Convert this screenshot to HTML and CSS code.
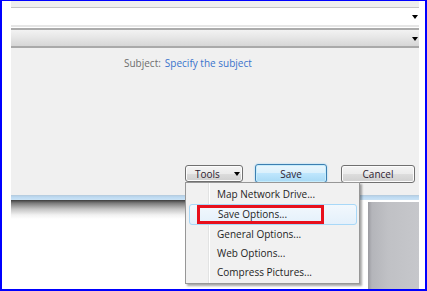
FILE: index.html
```html
<!DOCTYPE html>
<html lang="en">
<head>
    <meta charset="UTF-8">
    <title>Save As - Tools</title>
    <link rel="stylesheet" href="styles.css">
</head>
<body>
<div class="frame">
    <div class="window">
        <div class="top-band"></div>
        <div class="combo-row"><span class="arrow"></span></div>
        <div class="bar-row"><span class="arrow"></span></div>
        <div class="panel">
            <div class="subject">
                <span class="subject-label">Subject:</span>
                <span class="subject-value">Specify the subject</span>
            </div>
            <div class="buttons">
                <button class="btn tools"><span>Tools</span><span class="arrow"></span></button>
                <button class="btn save">Save</button>
                <button class="btn cancel">Cancel</button>
            </div>
        </div>
        <div class="below">
            <div class="blue-line"></div>
            <div class="behind">
                <div class="shade"></div>
                <div class="other-window"></div>
            </div>
        </div>
    </div>

    <ul class="menu">
        <li>Map Network Drive...</li>
        <li class="hover">Save Options...</li>
        <li>General Options...</li>
        <li>Web Options...</li>
        <li>Compress Pictures...</li>
    </ul>
    <div class="marker"></div>
</div>
</body>
</html>
```

FILE: styles.css
```css
body {
    margin: 0;
    font-family: "Open Sans", "Noto Sans", sans-serif;
    font-size: 10px;
}

.frame {
    position: relative;
    width: 427px;
    height: 291px;
    box-sizing: border-box;
    border: 2px solid #0000ff;
    border-top-width: 1px;
    background: #fff;
    padding: 0 6px 0 9px;
    overflow: hidden;
}

.window {
    display: flex;
    flex-direction: column;
    height: 100%;
}

.top-band {
    height: 6px;
    background: #eeeeee;
    border-bottom: 1px solid #c4c4c4;
}

.combo-row {
    height: 17px;
    background: #fff;
    border-bottom: 2px solid #e6e6e6;
    position: relative;
}

.bar-row {
    height: 16px;
    border-top: 2px solid #ababab;
    border-bottom: 2px solid #a9a9a9;
    margin-top: 1px;
    background: linear-gradient(#f2f2f2, #e8e8e8 40%, #d6d6d6);
    position: relative;
}

.arrow {
    display: inline-block;
    width: 0;
    height: 0;
    border-left: 3px solid transparent;
    border-right: 3px solid transparent;
    border-top: 4px solid #000;
}

.combo-row .arrow,
.bar-row .arrow {
    position: absolute;
    right: 1px;
    top: 7px;
}

.panel {
    height: 147px;
    background: #f0f0f0;
    display: flex;
    flex-direction: column;
    justify-content: space-between;
}

.subject {
    padding: 8px 0 0 113px;
    display: flex;
    gap: 4px;
}

.subject-label {
    color: #6d6d6d;
}

.subject-value {
    color: #3a73cc;
}

.buttons {
    display: flex;
    align-items: flex-start;
    padding: 0 0 12px 174px;
}

.btn {
    font-family: inherit;
    font-size: 10px;
    height: 18px;
    padding: 0;
    border: 1px solid #707070;
    border-radius: 3px;
    background: linear-gradient(#f4f4f4, #ebebeb 50%, #dddddd 50%, #cfcfcf);
    color: #2e2230;
    box-shadow: inset 0 0 0 1px #fcfcfc;
}

.tools {
    width: 58px;
    height: 17px;
    margin-top: 1px;
    display: flex;
    align-items: center;
    padding-left: 9px;
    gap: 14px;
}

.save {
    width: 72px;
    height: 19px;
    margin-left: 12px;
    border-color: #3c7fb1;
    background: linear-gradient(#eaf6fd, #d9f0fc 50%, #bee6fd 50%, #a7d9f5);
    box-shadow: inset 0 0 0 1px #c6ecfc, 0 0 2px #8fd0f8;
}

.cancel {
    width: 74px;
    margin-left: 14px;
    margin-top: 1px;
}

.below {
    flex: 1;
    display: flex;
    flex-direction: column;
}

.blue-line {
    height: 5px;
    background: linear-gradient(#b4c9da, #bcd9f1 40%, #cbe3f5);
}

.behind {
    flex: 1;
    display: flex;
}

.shade {
    width: 349px;
    background: linear-gradient(#3c3c3c, #7a7a7a 3px, #c4c4c4 9px, #f2f2f2 15px, #fff 19px);
}

.other-window {
    width: 51px;
    margin-left: 8px;
    margin-top: 2px;
    background: linear-gradient(90deg, #9a9aa0, #b4b5ba 4px, #c0c1c5 20px, #c6c7cb);
}

.menu {
    position: absolute;
    left: 183px;
    top: 181px;
    width: 169px;
    height: 96px;
    margin: 0;
    padding: 2px;
    list-style: none;
    background: linear-gradient(90deg, #f1f1f1 22px, #e2e3e3 22px, #e2e3e3 23px, #fff 23px, #fff 24px, #f1f1f1 24px);
    border: 1px solid #979797;
    box-shadow: 2px 2px 2px rgba(0, 0, 0, 0.35);
    color: #1e1e1e;
}

.menu li {
    height: 19px;
    line-height: 19px;
    padding-left: 29px;
}

.menu li.hover {
    border: 1px solid #a8d8f8;
    border-radius: 3px;
    background: linear-gradient(#f2f8fd, #e4f0fb);
    height: 19px;
    line-height: 19px;
    margin: 0 0 0 1px;
    padding-left: 28px;
}

.marker {
    position: absolute;
    left: 195px;
    top: 204px;
    width: 121px;
    height: 13px;
    border: 3px solid #e8101c;
}
```
